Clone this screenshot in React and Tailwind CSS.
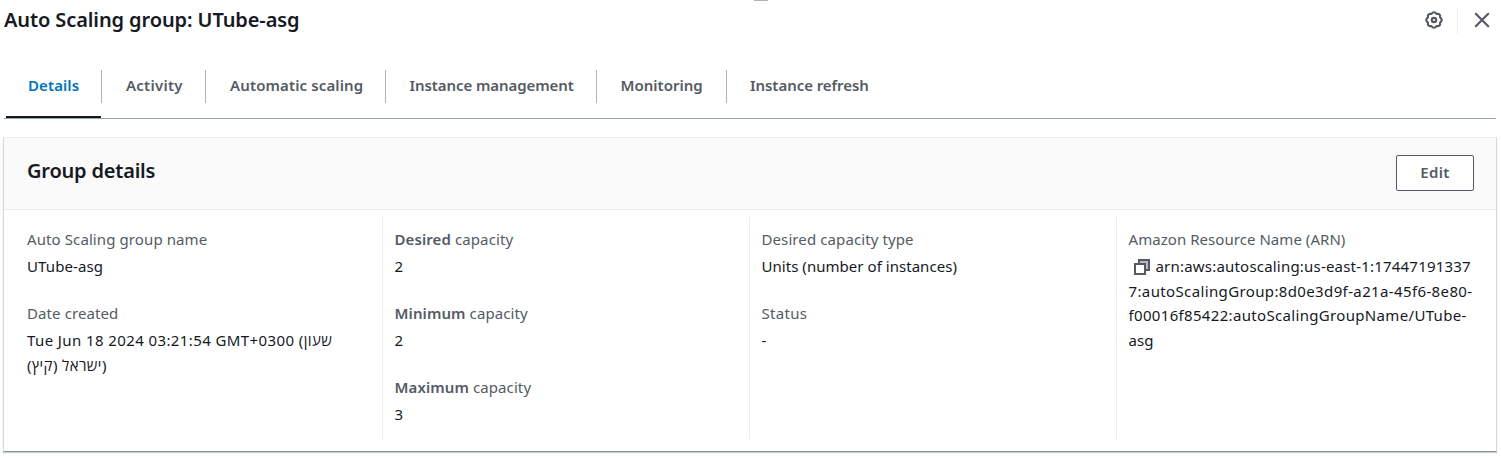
import React from "react";

const tabs = [
  { label: "Details", box: "w-[95px] pl-[22px]", text: "tracking-[0.1px]", active: true },
  { label: "Activity", box: "w-[104px] pl-[25px]", text: "tracking-[0.25px]" },
  { label: "Automatic scaling", box: "w-[180px] pl-[25px]", text: "tracking-[0.13px]" },
  { label: "Instance management", box: "w-[211px] pl-[24.5px]", text: "tracking-[-0.08px]" },
  { label: "Monitoring", box: "w-[130px] pl-[24.5px]", text: "tracking-[0.02px]" },
  { label: "Instance refresh", box: "w-[166px] pl-[24px]", text: "tracking-[-0.05px]", last: true },
];

function Tab({ tab }) {
  return (
    <button className={`relative flex h-12 shrink-0 items-start ${tab.box}`}>
      <span
        className={`flex h-[33px] items-center whitespace-nowrap pb-[3px] text-[15px] font-semibold ${tab.text} ${
          tab.active ? "text-[#0073bb]" : "text-[#545b64]"
        }`}
      >
        {tab.label}
      </span>
      {!tab.last && <span className="absolute top-0 right-[-1px] h-[33px] w-px bg-[#aab7b8]" />}
      {tab.active && <span className="absolute bottom-0 left-0 h-[2px] w-full bg-[#16191f]" />}
    </button>
  );
}

function Field({ label, children }) {
  return (
    <div className="h-[74px]">
      <div className="h-[27px] whitespace-nowrap leading-[24.5px] text-[#545b64]">{label}</div>
      <div className="leading-[24.5px] text-[#16191f]">{children}</div>
    </div>
  );
}

function Column({ first, width, children }) {
  return (
    <div className={`h-[222px] pt-[10px] tracking-[0.1px] ${width} ${first ? "pl-[23px]" : "border-l border-[#eaeded] pl-[11.5px]"}`}>
      {children}
    </div>
  );
}

function GearIcon() {
  return (
    <svg width="20" height="20" viewBox="0 0 20 20" fill="none" stroke="#545b64" strokeWidth="2.2" strokeLinejoin="round">
      <path d="M7.47 3.9Q10 .6 12.53 3.9Q16.65 3.35 16.1 7.47Q19.4 10 16.1 12.53Q16.65 16.65 12.53 16.1Q10 19.4 7.47 16.1Q3.35 16.65 3.9 12.53Q.6 10 3.9 7.47Q3.35 3.35 7.47 3.9z" />
      <circle cx="10" cy="10" r="2.200" />
    </svg>
  );
}

function CloseIcon() {
  return (
    <svg width="16" height="16" viewBox="0 0 16 16" fill="none" stroke="#545b64" strokeWidth="2.200" strokeLinecap="round">
      <path d="M1.800 1.800l12.400 12.400M14.200 1.800L1.800 14.200" />
    </svg>
  );
}

function CopyIcon() {
  return (
    <svg className="mr-[6px] ml-[5px] inline-block align-[-3px]" width="16" height="16" viewBox="0 0 16 16" fill="none" stroke="#545b64">
      <path d="M5 5V1h10v10h-4" strokeWidth="2" />
      <path d="M6 3h7v7" stroke="#b5babf" strokeWidth="2" />
      <path d="M1 5h10v10H1z" strokeWidth="2" fill="#fff" />
    </svg>
  );
}

export default function App() {
  return (
    <div className="relative flex h-[460px] w-[1502px] flex-col overflow-hidden bg-white font-['Noto_Sans','Open_Sans',sans-serif] text-[15px] text-[#16191f]">
      <span className="absolute top-0 left-[754px] h-px w-[14px] bg-[#aeb3b7]" />

      <header className="flex h-10 items-center justify-between pr-3 pl-1">
        <h1 className="text-[20px] font-semibold tracking-[-0.1px]">Auto Scaling group: UTube-asg</h1>
        <div className="flex items-center">
          <GearIcon />
          <span className="mr-4 ml-[13px] h-[27px] w-px bg-[#eaeded]" />
          <CloseIcon />
        </div>
      </header>

      <nav className="mr-[6px] ml-1 mt-7 flex h-[51px] border-b border-[#95a5a6] pl-[2px] pt-[2px]">
        {tabs.map((tab) => (
          <Tab key={tab.label} tab={tab} />
        ))}
      </nav>

      <section className="mt-[18px] mr-[5px] ml-[3px] h-[315px] border border-t-[#eaeded] border-r-[#d5dbdb] border-b-[#879596] border-l-[#d5dbdb] shadow-[0_1px_1px_0_rgba(0,28,36,0.2)]">
        <div className="flex h-[72px] items-center justify-between border-b border-[#eaeded] bg-[#fafafa] pr-[22px] pl-[23px]">
          <h2 className="pb-[6px] text-[20px] font-semibold tracking-[-0.2px]">Group details</h2>
          <button className="mb-[2px] h-9 w-[78px] rounded-[2px] border border-[#545b64] bg-white text-[15px] font-semibold tracking-[0.4px] text-[#545b64]">
            Edit
          </button>
        </div>

        <div className="flex pt-[7px]">
          <Column first width="w-[378px]">
            <Field label="Auto Scaling group name">UTube-asg</Field>
            <Field label="Date created">
              <div className="w-[330px] tracking-[0.4px]">{"Tue Jun 18 2024 03:21:54 GMT+0300 (שעון ישראל (קיץ))"}</div>
            </Field>
          </Column>
          <Column width="w-[367px]">
            <Field label={<><b className="font-semibold">Desired</b> capacity</>}>2</Field>
            <Field label={<><b className="font-semibold">Minimum</b> capacity</>}>2</Field>
            <Field label={<><b className="font-semibold">Maximum</b> capacity</>}>3</Field>
          </Column>
          <Column width="w-[367px]">
            <Field label="Desired capacity type"><span className="tracking-[0.04px]">Units (number of instances)</span></Field>
            <Field label={<span className="tracking-[0.3px]">Status</span>}>-</Field>
          </Column>
          <Column width="w-[380px]">
            <Field label={<span className="tracking-[0.05px]">Amazon Resource Name (ARN)</span>}>
              <div className="whitespace-nowrap tracking-[0.2px]"><CopyIcon /><span>arn:aws:autoscaling:us-east-1:17447191337</span></div>
              <div className="whitespace-nowrap tracking-[0.37px]">7:autoScalingGroup:8d0e3d9f-a21a-45f6-8e80-</div>
              <div className="whitespace-nowrap tracking-[0.33px]">f00016f85422:autoScalingGroupName/UTube-</div>
              <div>asg</div>
            </Field>
          </Column>
        </div>
      </section>
    </div>
  );
}
